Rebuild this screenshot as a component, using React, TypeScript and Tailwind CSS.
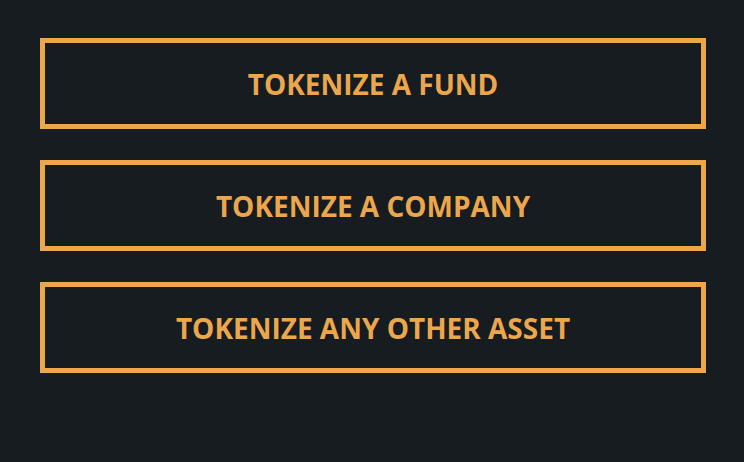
export default function App() {
  const items = ["TOKENIZE A FUND", "TOKENIZE A COMPANY", "TOKENIZE ANY OTHER ASSET"];
  return (
    <div
      className="w-[744px] h-[462px] bg-[#161c20] pt-[38px] pl-[40px] flex flex-col gap-[31px]"
      style={{ fontFamily: '"Open Sans", "Noto Sans", sans-serif' }}
    >
      {items.map((t) => (
        <div
          key={t}
          className="w-[666px] h-[91px] border-[5px] border-[#eca64c] flex items-center justify-center"
        >
          <span className="text-[28px] font-bold text-[#eca64c] leading-none">{t}</span>
        </div>
      ))}
    </div>
  );
}
